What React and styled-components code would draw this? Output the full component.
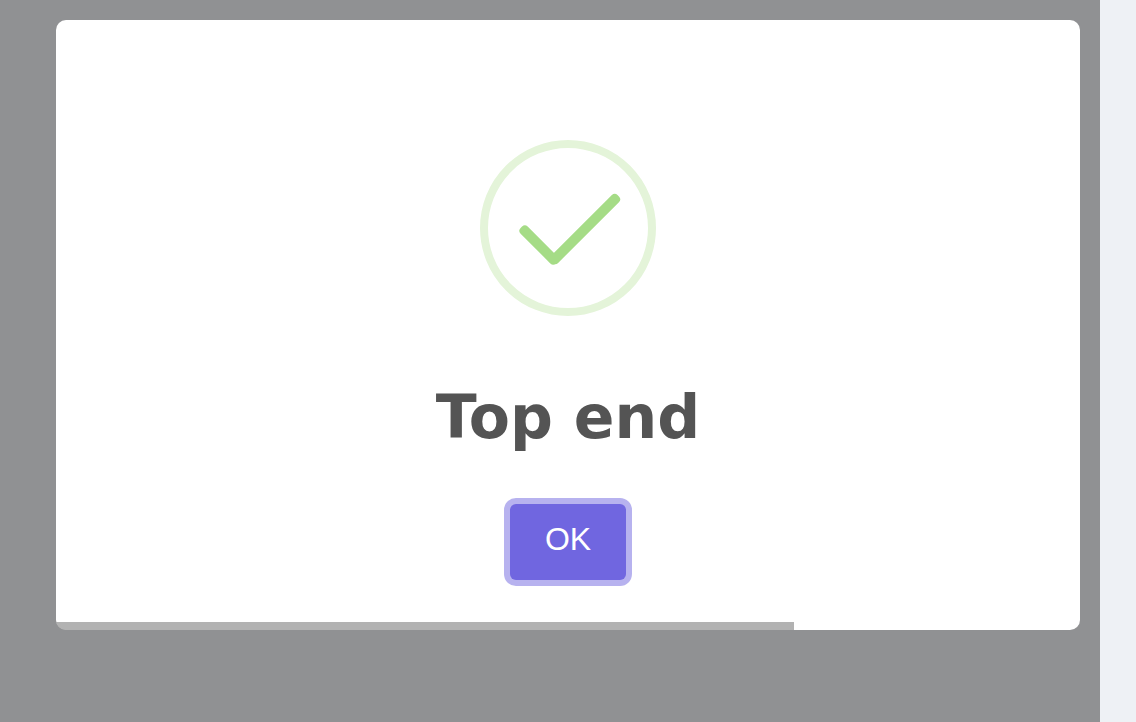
import React from 'react'
import styled, { createGlobalStyle } from 'styled-components'

const GlobalStyle = createGlobalStyle`
  html, body {
    margin: 0;
    padding: 0;
    height: 100%;
    overflow: hidden;
    background: #eef1f5;
  }
  #root {
    height: 100%;
  }
`

const Page = styled.div`
  display: flex;
  height: 722px;
  width: 1136px;
`

const Backdrop = styled.div`
  width: 1100px;
  height: 100%;
  box-sizing: border-box;
  padding: 20px 20px 0 56px;
  background: #909193;
`

const Modal = styled.div`
  position: relative;
  display: flex;
  flex-direction: column;
  align-items: center;
  width: 1024px;
  height: 610px;
  box-sizing: border-box;
  padding-top: 120px;
  background: #fff;
  border-radius: 10px;
  overflow: hidden;
`

const IconRing = styled.div`
  display: flex;
  align-items: center;
  justify-content: center;
  width: 176px;
  height: 176px;
  box-sizing: border-box;
  border: 8px solid #e4f4d9;
  border-radius: 50%;
`

const Title = styled.h2`
  margin: 65px 0 0;
  font-family: "DejaVu Sans", sans-serif;
  font-size: 60px;
  font-weight: 700;
  line-height: 72px;
  color: #545454;
`

const OkButton = styled.button`
  width: 116px;
  height: 76px;
  margin-top: 51px;
  padding: 0 0 6px;
  border: 0;
  border-radius: 6px;
  background: #7066e0;
  box-shadow: 0 0 0 6px rgba(112, 102, 224, 0.5);
  color: #fff;
  font-family: "Liberation Sans", Arial, sans-serif;
  font-size: 32px;
`

const Progress = styled.div`
  position: absolute;
  left: 0;
  bottom: 0;
  height: 8px;
  background: rgba(0, 0, 0, 0.3);
`

const App = () => {
  return (
    <Page>
      <GlobalStyle />
      <Backdrop>
        <Modal>
          <IconRing>
            <svg width="160" height="160" viewBox="0 0 160 160" fill="#a5dc86">
              <rect x="26" y="92" width="50" height="10" rx="4" transform="rotate(45 51 97)" />
              <rect x="50" y="76" width="94" height="10" rx="4" transform="rotate(-45 97 81)" />
            </svg>
          </IconRing>
          <Title>Top end</Title>
          <OkButton>OK</OkButton>
          <Progress style={{ width: 738 }} />
        </Modal>
      </Backdrop>
    </Page>
  )
}

export default App
